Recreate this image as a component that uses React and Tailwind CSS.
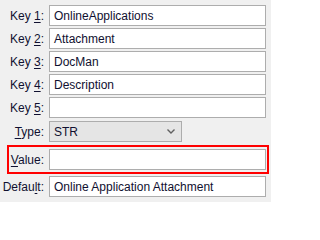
import React from 'react';

const FONT = { fontFamily: '"Liberation Sans", Arial, sans-serif' };

// label with one underlined access-key character
function Label({ pre, u, post, className = 'w-[46px]' }) {
  return (
    <div className={`${className} shrink-0 text-right pr-[2px] text-[12px] text-[#101030]`}>
      {pre}<span className="underline underline-offset-[2px]">{u}</span>{post}
    </div>
  );
}

function TextBox({ value }) {
  return (
    <div className="flex-1 h-[21px] bg-white border border-[#adadad] flex items-center pl-[4px] text-[12px] text-[#101030] whitespace-nowrap overflow-hidden">
      {value}
    </div>
  );
}

const KEYS = [
  { n: '1', v: 'OnlineApplications' },
  { n: '2', v: 'Attachment' },
  { n: '3', v: 'DocMan' },
  { n: '4', v: 'Description' },
  { n: '5', v: '' },
];

export default function App() {
  return (
    <div className="w-[271px] h-[202px] bg-[#f0f0f0] overflow-hidden pt-[5px] pr-[5px] flex flex-col gap-[2px]" style={FONT}>
      {KEYS.map(k => (
        <div key={k.n} className="flex items-center gap-[3px]">
          <Label pre="Key " u={k.n} post=":" />
          <TextBox value={k.v} />
        </div>
      ))}

      {/* Type select */}
      <div className="flex items-center gap-[3px] mt-[1px]">
        <Label pre="" u="T" post="ype:" />
        <div className="w-[133px] h-[21px] bg-[#e5e5e5] border border-[#adadad] flex items-center justify-between pl-[4px] pr-[6px] text-[12px] text-[#101030]">
          <span>STR</span>
          <svg width="8" height="5" viewBox="0 0 8 5" fill="none">
            <path d="M0.5 0.5 L4 4 L7.5 0.5" stroke="#606060" strokeWidth="1.4" />
          </svg>
        </div>
      </div>

      {/* Highlighted value row */}
      <div className="ml-[7px] mr-[-3px] mt-[1px] border-2 border-[#ff0000] pt-[2px] pb-[2px] pr-[1px] flex items-center gap-[3px]">
        <Label pre="" u="V" post="alue:" className="w-[37px]" />
        <TextBox value="" />
      </div>

      <div className="flex items-center gap-[3px]">
        <Label pre="Defau" u="l" post="t:" />
        <TextBox value="Online Application Attachment" />
      </div>
    </div>
  );
}
